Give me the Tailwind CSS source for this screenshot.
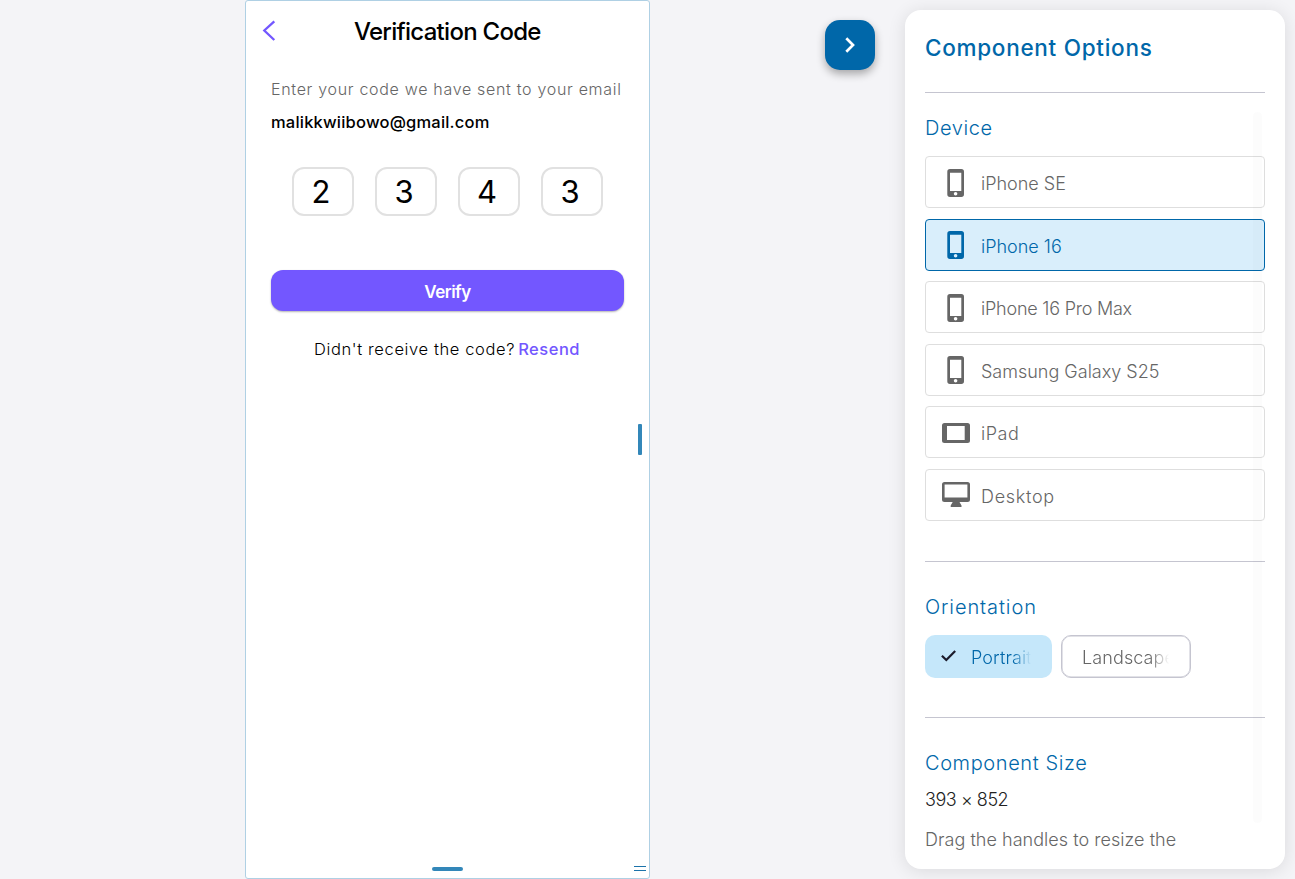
<!DOCTYPE html>
<html lang="en">
<head>
<meta charset="utf-8">
<title>Verification Code</title>
<script src="https://cdn.jsdelivr.net/npm/@tailwindcss/browser@4"></script>
</head>
<body class="bg-[#f4f4f7] overflow-hidden font-['Inter',sans-serif] font-light">
<svg class="hidden">
  <symbol id="phone" viewBox="0 0 28 28"><path fill="currentColor" fill-rule="evenodd" d="M8 0h11.300a2.700 2.700 0 0 1 2.700 2.700v22.600a2.700 2.700 0 0 1-2.700 2.700H8a2.700 2.700 0 0 1-2.700-2.700V2.700a2.700 2.700 0 0 1 2.700-2.700zM8 3.800v18.200h11.300V3.800zM13.600 23a1.800 1.800 0 1 0 0 3.600a1.800 1.800 0 0 0 0-3.600z"/></symbol>
</svg>
<div class="flex items-start h-[879px] w-[1295px]">
  <main class="relative ml-[245px] flex h-[879px] w-[405px] shrink-0 flex-col rounded-[3px] border border-[#afd0e4] bg-white text-black">
    <header class="flex h-[60px] items-center pl-4">
      <svg class="h-[22px] w-[14px] shrink-0" viewBox="0 0 14 22" fill="none" stroke="#7357ff" stroke-width="2.300"><path d="M12.300 1.300L2.300 10.500L12.300 20"/></svg>
      <h1 class="ml-[78px] pt-[2px] whitespace-nowrap text-[24px] font-medium tracking-[-0.720px]">Verification Code</h1>
    </header>
    <section class="px-[25px]">
      <p class="mt-[14px] h-7 whitespace-nowrap text-[16px] leading-7 tracking-[0.690px] text-[#666]">Enter your code we have sent to your email</p>
      <p class="mt-[5px] h-7 whitespace-nowrap text-[16.500px] leading-7 font-medium tracking-[0.200px]">malikkwiibowo@gmail.com</p>
      <div class="mt-[31px] ml-[21px] flex gap-[21px] text-[31px] font-normal">
        <div class="flex h-[49px] w-[62px] items-center justify-center rounded-[12px] border-2 border-[#e1e1e1] pt-[2px] pr-[4px]">2</div>
        <div class="flex h-[49px] w-[62px] items-center justify-center rounded-[12px] border-2 border-[#e1e1e1] pt-[2px] pr-[4px]">3</div>
        <div class="flex h-[49px] w-[62px] items-center justify-center rounded-[12px] border-2 border-[#e1e1e1] pt-[2px] pr-[4px]">4</div>
        <div class="flex h-[49px] w-[62px] items-center justify-center rounded-[12px] border-2 border-[#e1e1e1] pt-[2px] pr-[4px]">3</div>
      </div>
      <button class="mt-[54px] flex h-[41px] w-[353px] items-center justify-center rounded-[12px] bg-[#7357ff] pt-[4px] text-[17px] font-semibold tracking-[-0.500px] text-white shadow-[0_1px_2px_rgba(0,0,0,0.300)]">Verify</button>
      <p class="mt-6 ml-[43px] flex h-7 gap-[3px] whitespace-nowrap text-[16.500px] leading-7 tracking-[0.620px]"><span>Didn't receive the code?</span><span class="font-medium tracking-[0.500px] text-[#7357ff]">Resend</span></p>
    </section>
    <div class="absolute top-[423px] right-[7px] h-[31px] w-1 rounded-[1px] bg-[#3387b9]"></div>
    <div class="absolute bottom-[7px] left-[186px] h-[4px] w-[31px] rounded-[2px] bg-[#3387b9]"></div>
    <div class="absolute right-[3px] bottom-[7px] h-[5px] w-[12px] border-y border-[#1c73aa]"></div>
  </main>
  <button class="mt-5 ml-[175px] flex h-[50px] w-[50px] shrink-0 items-center justify-center rounded-[15px] bg-[#0067a9] shadow-[0_4px_9px_rgba(0,0,0,0.320)]">
    <svg class="h-4 w-[10px]" viewBox="0 0 10 16" fill="none" stroke="#fff" stroke-width="2.700"><path d="M1.300 1.300L8 8L1.300 14.700"/></svg>
  </button>
  <aside class="relative mt-[10px] ml-[30px] h-[859px] w-[380px] shrink-0 rounded-[16px] bg-white px-5 text-[18px] text-[#666] shadow-[0_2px_18px_rgba(0,0,0,0.110)]">
    <div class="flex h-[83px] items-center border-b border-[#c5c5d0] pb-[7px] whitespace-nowrap text-[22.500px] font-medium tracking-[0.720px] text-[#0067a9]">Component Options</div>
    <h2 class="mt-5 h-[30px] whitespace-nowrap text-[20px] leading-[30px] tracking-[0.600px] text-[#0067a9]">Device</h2>
    <div class="mt-[13px] flex flex-col gap-[10.500px]">
      <div class="flex h-[52px] items-center gap-[11px] rounded-[4px] border border-[#dedede] pt-px pl-4"><svg class="h-7 w-7"><use href="#phone"/></svg><span class="pt-px">iPhone SE</span></div>
      <div class="flex h-[52px] items-center gap-[11px] rounded-[4px] border border-[#0067a9] bg-[#d9eefb] pl-4 text-[#0067a9]"><svg class="h-7 w-7"><use href="#phone"/></svg><span class="pt-[3px]">iPhone 16</span></div>
      <div class="flex h-[52px] items-center gap-[11px] rounded-[4px] border border-[#dedede] pt-px pl-4"><svg class="h-7 w-7"><use href="#phone"/></svg><span class="pt-px tracking-[-0.220px]">iPhone 16 Pro Max</span></div>
      <div class="flex h-[52px] items-center gap-[11px] rounded-[4px] border border-[#dedede] pl-4"><svg class="h-7 w-7"><use href="#phone"/></svg><span class="pt-[3px]">Samsung Galaxy S25</span></div>
      <div class="flex h-[52px] items-center gap-[11px] rounded-[4px] border border-[#dedede] pt-px pl-4"><svg class="h-7 w-7" viewBox="0 0 28 28"><path fill="currentColor" fill-rule="evenodd" d="M2.500 4h23a2.500 2.500 0 0 1 2.500 2.500v15a2.500 2.500 0 0 1-2.500 2.500h-23A2.500 2.500 0 0 1 0 21.500v-15A2.500 2.500 0 0 1 2.500 4zM5 6.900v14.200h17.700V6.900z"/></svg><span class="pt-px tracking-[0.500px]">iPad</span></div>
      <div class="flex h-[52px] items-center gap-[11px] rounded-[4px] border border-[#dedede] pl-4"><svg class="h-7 w-7" viewBox="0 0 28 28"><path fill="currentColor" fill-rule="evenodd" d="M2.500 1h23A2.500 2.500 0 0 1 28 3.500v15a2.500 2.500 0 0 1-2.500 2.500H17.500l2 3.500v1.500H8.700v-1.500l2-3.500H2.500A2.500 2.500 0 0 1 0 18.500v-15A2.500 2.500 0 0 1 2.500 1zM2.600 3.600v12.800h22.800V3.600z"/></svg><span class="pt-[3px] tracking-[0.700px]">Desktop</span></div>
    </div>
    <h2 class="mt-10 h-[62px] border-t border-[#c5c5d0] pt-[30px] whitespace-nowrap text-[20px] leading-[30px] tracking-[0.900px] text-[#0067a9]">Orientation</h2>
    <div class="mt-[12px] flex gap-[9px]">
      <div class="flex h-[43px] w-[127px] items-center rounded-[10px] bg-[#c5e7fa] pl-4 text-[#0067a9]">
        <svg class="mr-[15px] h-4 w-[15px] shrink-0" viewBox="0 0 15 16" fill="none" stroke="#1b1b2b" stroke-width="2.200"><path d="M.9 7.700L5.300 12L14.200 3"/></svg>
        <span class="w-[60px] overflow-hidden mask-r-from-70% mask-r-to-100% pt-[2px] whitespace-nowrap tracking-[0.100px]">Portrait</span>
      </div>
      <div class="flex h-[43px] w-[130px] items-center rounded-[10px] border border-[#c5c5d0] pl-5 shadow-[inset_0_0_0_0.500px_#c5c5d0]"><span class="w-[87px] overflow-hidden mask-r-from-78% mask-r-to-100% pt-[2px] whitespace-nowrap tracking-[0.100px]">Landscape</span></div>
    </div>
    <h2 class="mt-[39px] h-[61px] border-t border-[#c5c5d0] pt-[30px] whitespace-nowrap text-[20px] leading-[30px] tracking-[0.600px] text-[#0067a9]">Component Size</h2>
    <p class="mt-[8px] h-7 whitespace-nowrap leading-7 tracking-[-0.450px] text-[#222]">393 × 852</p>
    <p class="mt-[12px] h-[25px] overflow-hidden whitespace-nowrap leading-7 tracking-[0.040px]">Drag the handles to resize the</p>
    <div class="absolute top-[102px] right-[23px] h-[711px] w-[9px] rounded-[4px] bg-black/[0.012]"></div>
  </aside>
</div>
</body>
</html>
